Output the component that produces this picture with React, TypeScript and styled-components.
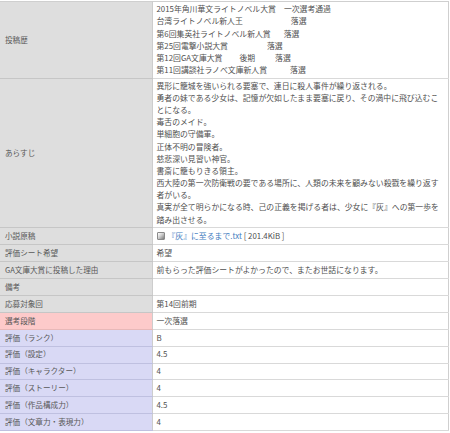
import React from "react";
import styled, { createGlobalStyle } from "styled-components";

const Global = createGlobalStyle`
  html, body { margin: 0; padding: 0; background: #ffffff; }
  body { font-family: "Noto Sans CJK JP", "Noto Sans", sans-serif; }
`;

type Tone = "grey" | "pink" | "lavender";

const toneBg: Record<Tone, string> = {
  grey: "#dedede",
  pink: "#fdcaca",
  lavender: "#d9d9f5",
};
const toneLine: Record<Tone, string> = {
  grey: "#c6c6c6",
  pink: "#e8b8b8",
  lavender: "#bfc0e0",
};

const Table = styled.table`
  width: 449px;
  border-collapse: collapse;
  table-layout: fixed;
  border-top: 1px solid #cfcfcf;
  border-right: 1px solid #cfcfcf;
  margin-top: 1px;
`;

const Label = styled.th<{ $tone?: Tone; $compact?: boolean }>`
  width: 152px;
  box-sizing: border-box;
  background: ${(p) => toneBg[p.$tone ?? "grey"]};
  border-bottom: 1px solid ${(p) => toneLine[p.$tone ?? "grey"]};
  border-right: 1px solid #cdcdcd;
  padding: ${(p) => (p.$compact ? "1.9px" : "1.3px")} 4px ${(p) => (p.$compact ? "1.9px" : "1.3px")} 5px;
  text-align: left;
  vertical-align: middle;
  font-weight: normal;
  font-size: 7.6px;
  line-height: 12.15px;
  color: #585858;
  white-space: nowrap;
`;

const Value = styled.td<{ $compact?: boolean }>`
  background: #ffffff;
  border-bottom: 1px solid #d9d9d9;
  padding: ${(p) => (p.$compact ? "1.9px" : "1.3px")} 3px ${(p) => (p.$compact ? "1.9px" : "1.3px")} 4px;
  vertical-align: top;
  font-size: 7.85px;
  line-height: 12.15px;
  color: #505050;
  white-space: nowrap;
  overflow: hidden;
`;

const Line = styled.div`
  display: flex;
  align-items: baseline;
`;

const Gap = styled.span<{ $w: number }>`
  display: inline-block;
  width: ${(p) => p.$w}px;
`;

const FileIcon = styled.span`
  display: inline-block;
  width: 8px;
  height: 8px;
  margin: 0 3px -1px 0;
  border: 1px solid #8a8a8a;
  border-radius: 1px;
  box-sizing: border-box;
  background: linear-gradient(135deg, #ffffff 0%, #d0d0d0 45%, #7a7a7a 100%);
`;

const FileLink = styled.a`
  color: #3f7cc0;
  text-decoration: none;
`;

const Size = styled.span`
  color: #505050;
`;

const history: { name: string; parts: { gap: number; text: string }[] }[] = [
  { name: "2015年角川華文ライトノベル大賞", parts: [{ gap: 8, text: "一次選考通過" }] },
  { name: "台湾ライトノベル新人王", parts: [{ gap: 48, text: "落選" }] },
  { name: "第6回集英社ライトノベル新人賞", parts: [{ gap: 13, text: "落選" }] },
  { name: "第25回電撃小説大賞", parts: [{ gap: 39, text: "落選" }] },
  {
    name: "第12回GA文庫大賞",
    parts: [
      { gap: 17, text: "後期" },
      { gap: 20, text: "落選" },
    ],
  },
  { name: "第11回講談社ラノベ文庫新人賞", parts: [{ gap: 23, text: "落選" }] },
];

const synopsis = [
  "異形に籠城を強いられる要塞で、連日に殺人事件が繰り返される。",
  "勇者の妹である少女は、記憶が欠如したまま要塞に戻り、その渦中に飛び込むこ",
  "とになる。",
  "毒舌のメイド。",
  "単細胞の守備軍。",
  "正体不明の冒険者。",
  "慈悲深い見習い神官。",
  "書斎に籠もりきる領主。",
  "西大陸の第一次防衛戦の要である場所に、人類の未来を顧みない殺戮を繰り返す",
  "者がいる。",
  "真実が全て明らかになる時、己の正義を掲げる者は、少女に『灰』への第一歩を",
  "踏み出させる。",
];

const simpleRows: { label: string; value: string; tone?: Tone }[] = [
  { label: "評価シート希望", value: "希望" },
  { label: "GA文庫大賞に投稿した理由", value: "前もらった評価シートがよかったので、またお世話になります。" },
  { label: "備考", value: "" },
  { label: "応募対象回", value: "第14回前期" },
  { label: "選考段階", value: "一次落選", tone: "pink" },
  { label: "評価（ランク）", value: "B", tone: "lavender" },
  { label: "評価（設定）", value: "4.5", tone: "lavender" },
  { label: "評価（キャラクター）", value: "4", tone: "lavender" },
  { label: "評価（ストーリー）", value: "4", tone: "lavender" },
  { label: "評価（作品構成力）", value: "4.5", tone: "lavender" },
  { label: "評価（文章力・表現力）", value: "4", tone: "lavender" },
];

export default function App() {
  return (
    <>
      <Global />
      <Table>
        <tbody>
          <tr>
            <Label>投稿歴</Label>
            <Value>
              {history.map((h) => (
                <Line key={h.name}>
                  <span>{h.name}</span>
                  {h.parts.map((p) => (
                    <React.Fragment key={p.text}>
                      <Gap $w={p.gap} />
                      <span>{p.text}</span>
                    </React.Fragment>
                  ))}
                </Line>
              ))}
            </Value>
          </tr>
          <tr>
            <Label>あらすじ</Label>
            <Value>
              {synopsis.map((s) => (
                <Line key={s}>{s}</Line>
              ))}
            </Value>
          </tr>
          <tr>
            <Label $compact>小説原稿</Label>
            <Value $compact>
              <FileIcon />
              <FileLink href="#">『灰』に至るまで.txt</FileLink>
              <Size> [ 201.4KiB ]</Size>
            </Value>
          </tr>
          {simpleRows.map((r) => (
            <tr key={r.label}>
              <Label $compact $tone={r.tone}>
                {r.label}
              </Label>
              <Value $compact>{r.value || "\u00a0"}</Value>
            </tr>
          ))}
        </tbody>
      </Table>
    </>
  );
}
